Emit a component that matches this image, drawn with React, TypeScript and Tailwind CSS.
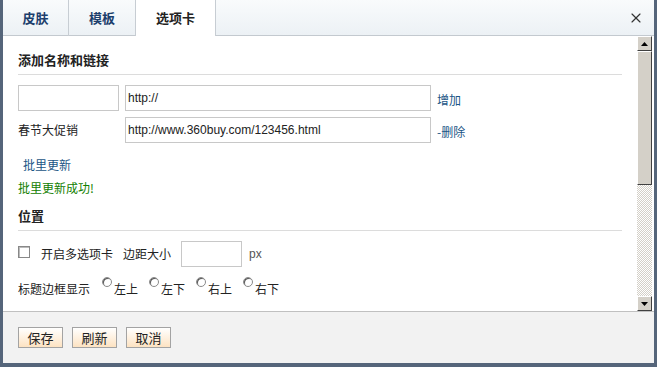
import { X } from 'lucide-react';

const tabs = [
    { label: '皮肤', w: 'w-[66px]', active: false },
    { label: '模板', w: 'w-[67px]', active: false },
    { label: '选项卡', w: 'w-[80px]', active: true },
];

function Radio({ label }: { label: string }) {
    return (
        <label className="flex items-start mr-[11px]">
            <span className="mt-[-2px] w-[10px] h-[10px] rounded-full border border-[#8a8a8a] bg-white shadow-[inset_1px_1px_0_#555]" />
            <span className="ml-[2px]">{label}</span>
        </label>
    );
}

function ScrollArrow({ up }: { up: boolean }) {
    return (
        <div className="w-[15px] h-[15px] bg-[#d4d0c8] border border-t-white border-l-white border-r-[#404040] border-b-[#404040] flex items-center justify-center">
            <svg width="7" height="4" viewBox="0 0 7 4">
                {up ? <polygon points="3.5,0 7,4 0,4" fill="#000" /> : <polygon points="0,0 7,0 3.5,4" fill="#000" />}
            </svg>
        </div>
    );
}

export default function App() {
    return (
        <div className="w-[657px] h-[367px] bg-[#55657a] pl-[3px] pr-[3px] pb-[4px] overflow-hidden font-['Noto_Sans_CJK_SC','Liberation_Sans',sans-serif] text-[12px] text-[#222]">
            <div className="h-full bg-white flex flex-col">
                {/* Tab bar */}
                <div className="h-[36px] shrink-0 flex bg-gradient-to-b from-[#f9fbfc] to-[#ecf1f5] border-b border-[#c3c9cf] relative">
                    {tabs.map((t) => (
                        <div
                            key={t.label}
                            className={`${t.w} h-[36px] flex items-center justify-center border-r border-[#c7cdd3] text-[13px] font-bold ${
                                t.active ? 'bg-white text-[#222] -mb-px' : 'text-[#1c3e6c]'
                            }`}
                        >
                            {t.label}
                        </div>
                    ))}
                    <div className="flex-1" />
                    <div className="w-[36px] flex items-center justify-center text-[#333]">
                        <X size={16} strokeWidth={1.75} />
                    </div>
                </div>

                {/* Content + scrollbar */}
                <div className="flex-1 flex min-h-0">
                    <div className="flex-1 pl-[15px] pr-[15px] overflow-hidden">
                        <div className="pt-[14px] pb-[4px] leading-[20px] text-[13px] font-bold border-b border-[#dcdcdc] text-[#222]">
                            添加名称和链接
                        </div>

                        <div className="mt-[10px] flex items-center h-[26px]">
                            <input className="w-[101px] h-[26px] border border-[#c8c8c8] outline-none" />
                            <input
                                defaultValue="http://"
                                className="ml-[6px] w-[306px] h-[26px] border border-[#c8c8c8] px-[2px] font-['Liberation_Sans',sans-serif] text-[12px] outline-none"
                            />
                            <a className="ml-[6px] mt-[4px] text-[#1a5585]">增加</a>
                        </div>

                        <div className="mt-[6px] flex items-center h-[26px]">
                            <span className="w-[107px]">春节大促销</span>
                            <input
                                defaultValue="http://www.360buy.com/123456.html"
                                className="w-[306px] h-[26px] border border-[#c8c8c8] px-[2px] font-['Liberation_Sans',sans-serif] text-[12px] outline-none"
                            />
                            <a className="ml-[6px] mt-[4px] text-[#1a5585]">-删除</a>
                        </div>

                        <div className="mt-[12px] h-[20px] leading-[20px] pl-[5px] text-[#1a5585]">批里更新</div>
                        <div className="mt-[3px] h-[20px] leading-[20px] text-[#138000]">批里更新成功!</div>

                        <div className="pt-[8px] pb-[4px] leading-[20px] text-[13px] font-bold border-b border-[#dcdcdc] text-[#222]">
                            位置
                        </div>

                        <div className="mt-[10px] flex items-center h-[26px]">
                            <span className="w-[12px] h-[12px] border border-[#888] bg-white shadow-[inset_1px_1px_0_#bbb] mt-[-4px]" />
                            <span className="ml-[11px]">开启多选项卡</span>
                            <span className="ml-[10px]">边距大小</span>
                            <input className="ml-[10px] w-[61px] h-[26px] border border-[#c8c8c8] outline-none" />
                            <span className="ml-[7px] text-[#555] font-['Liberation_Sans',sans-serif]">px</span>
                        </div>

                        <div className="mt-[12px] h-[20px] leading-[20px] flex items-center">
                            <span className="mr-[12px]">标题边框显示</span>
                            <Radio label="左上" />
                            <Radio label="左下" />
                            <Radio label="右上" />
                            <Radio label="右下" />
                        </div>
                    </div>

                    {/* scrollbar */}
                    <div className="w-[15px] mr-[2px] flex flex-col">
                        <ScrollArrow up />
                        <div className="h-[134px] bg-[#d4d0c8] border border-t-white border-l-white border-r-[#404040] border-b-[#404040]" />
                        <div className="flex-1 bg-[repeating-conic-gradient(#d4d0c8_0%_25%,#ffffff_0%_50%)] bg-[length:2px_2px]" />
                        <ScrollArrow up={false} />
                    </div>
                </div>

                {/* Footer */}
                <div className="h-[52px] shrink-0 bg-[#f2f2f2] border-t border-[#c0c0c0] pl-[15px] pt-[15px] flex gap-[9px]">
                    {['保存', '刷新', '取消'].map((b) => (
                        <button
                            key={b}
                            className="w-[45px] h-[21px] border border-[#a3a3a3] bg-gradient-to-b from-white to-[#fde3c2] text-[13px] text-[#222] leading-none"
                        >
                            {b}
                        </button>
                    ))}
                </div>
            </div>
        </div>
    );
}
